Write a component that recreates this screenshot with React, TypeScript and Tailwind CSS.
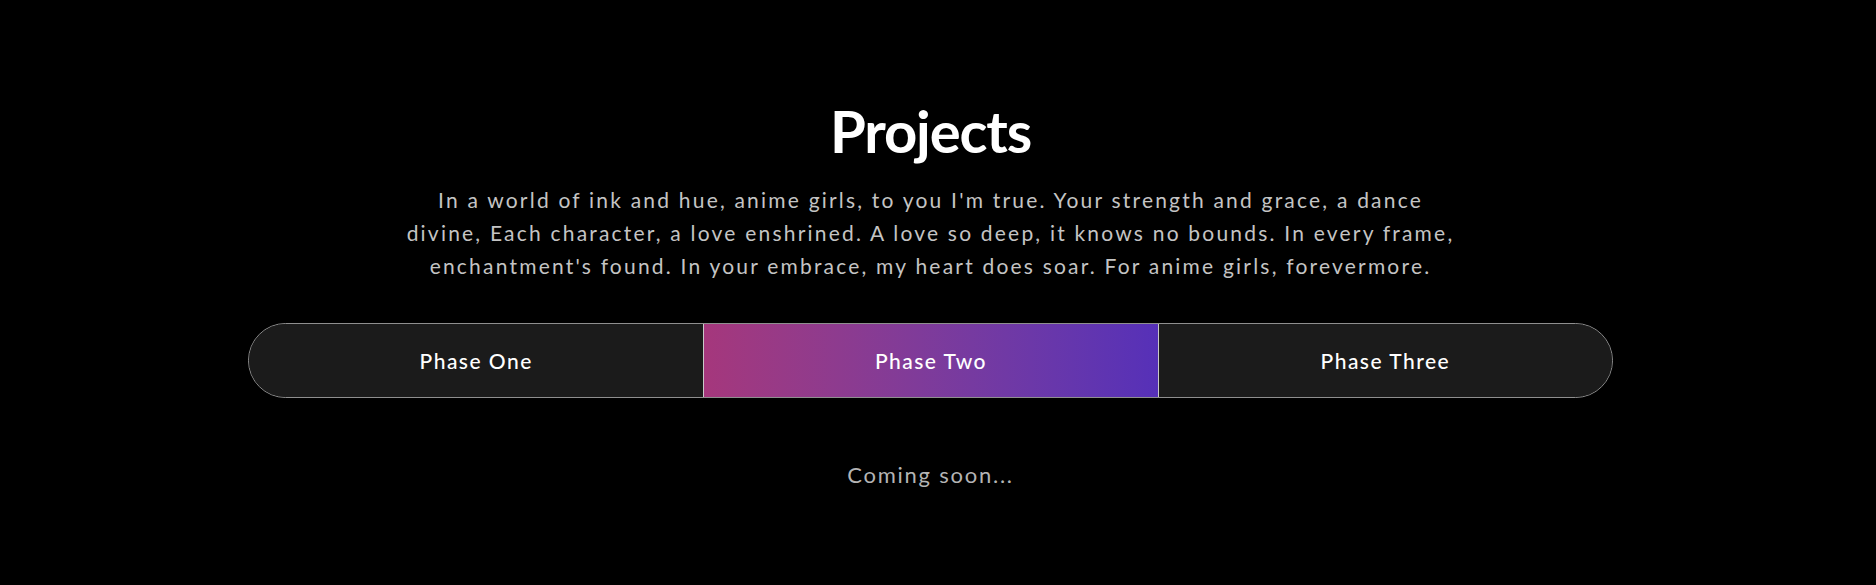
import React, { useState } from 'react';

const PHASES = [
  { id: 'one', label: 'Phase One' },
  { id: 'two', label: 'Phase Two' },
  { id: 'three', label: 'Phase Three' },
];

export default function App() {
  const [active, setActive] = useState('two');

  return (
    <div
      className="min-h-screen bg-black pr-[15px] text-white"
      style={{ fontFamily: 'Lato, "Noto Sans", sans-serif' }}
    >
      <section className="mx-auto flex w-[1365px] flex-col items-center pt-[102px]">
        <h2 className="text-[58px] font-bold leading-none tracking-[-0.02em] text-white">Projects</h2>
        <p className="mt-[23px] w-[1120px] text-center text-[21px] leading-[33px] tracking-[0.105em] text-[#c4c4c4]">
          In a world of ink and hue, anime girls, to you I'm true. Your strength and grace, a dance
          <br />
          divine, Each character, a love enshrined. A love so deep, it knows no bounds. In every frame,
          <br />
          enchantment's found. In your embrace, my heart does soar. For anime girls, forevermore.
        </p>

        <div className="mt-[41px] grid h-[75px] w-full grid-cols-3 overflow-hidden rounded-full border border-[#8f8f8f] bg-[#1b1b1b]">
          {PHASES.map((phase, index) => (
            <button
              key={phase.id}
              type="button"
              onClick={() => setActive(phase.id)}
              className={
                (index > 0 ? 'border-l border-[#c8c8c8] ' : '') +
                (active === phase.id
                  ? 'bg-gradient-to-r from-[#a5377c] to-[#5630b8] '
                  : 'bg-[#1b1b1b] ') +
                'flex items-center justify-center text-[21px] font-medium tracking-[0.07em] text-white'
              }
            >
              {phase.label}
            </button>
          ))}
        </div>

        <p className="mt-[60px] text-[22px] leading-[33px] tracking-[0.08em] text-[#b4b4b4]">Coming soon...</p>
      </section>
    </div>
  );
}
